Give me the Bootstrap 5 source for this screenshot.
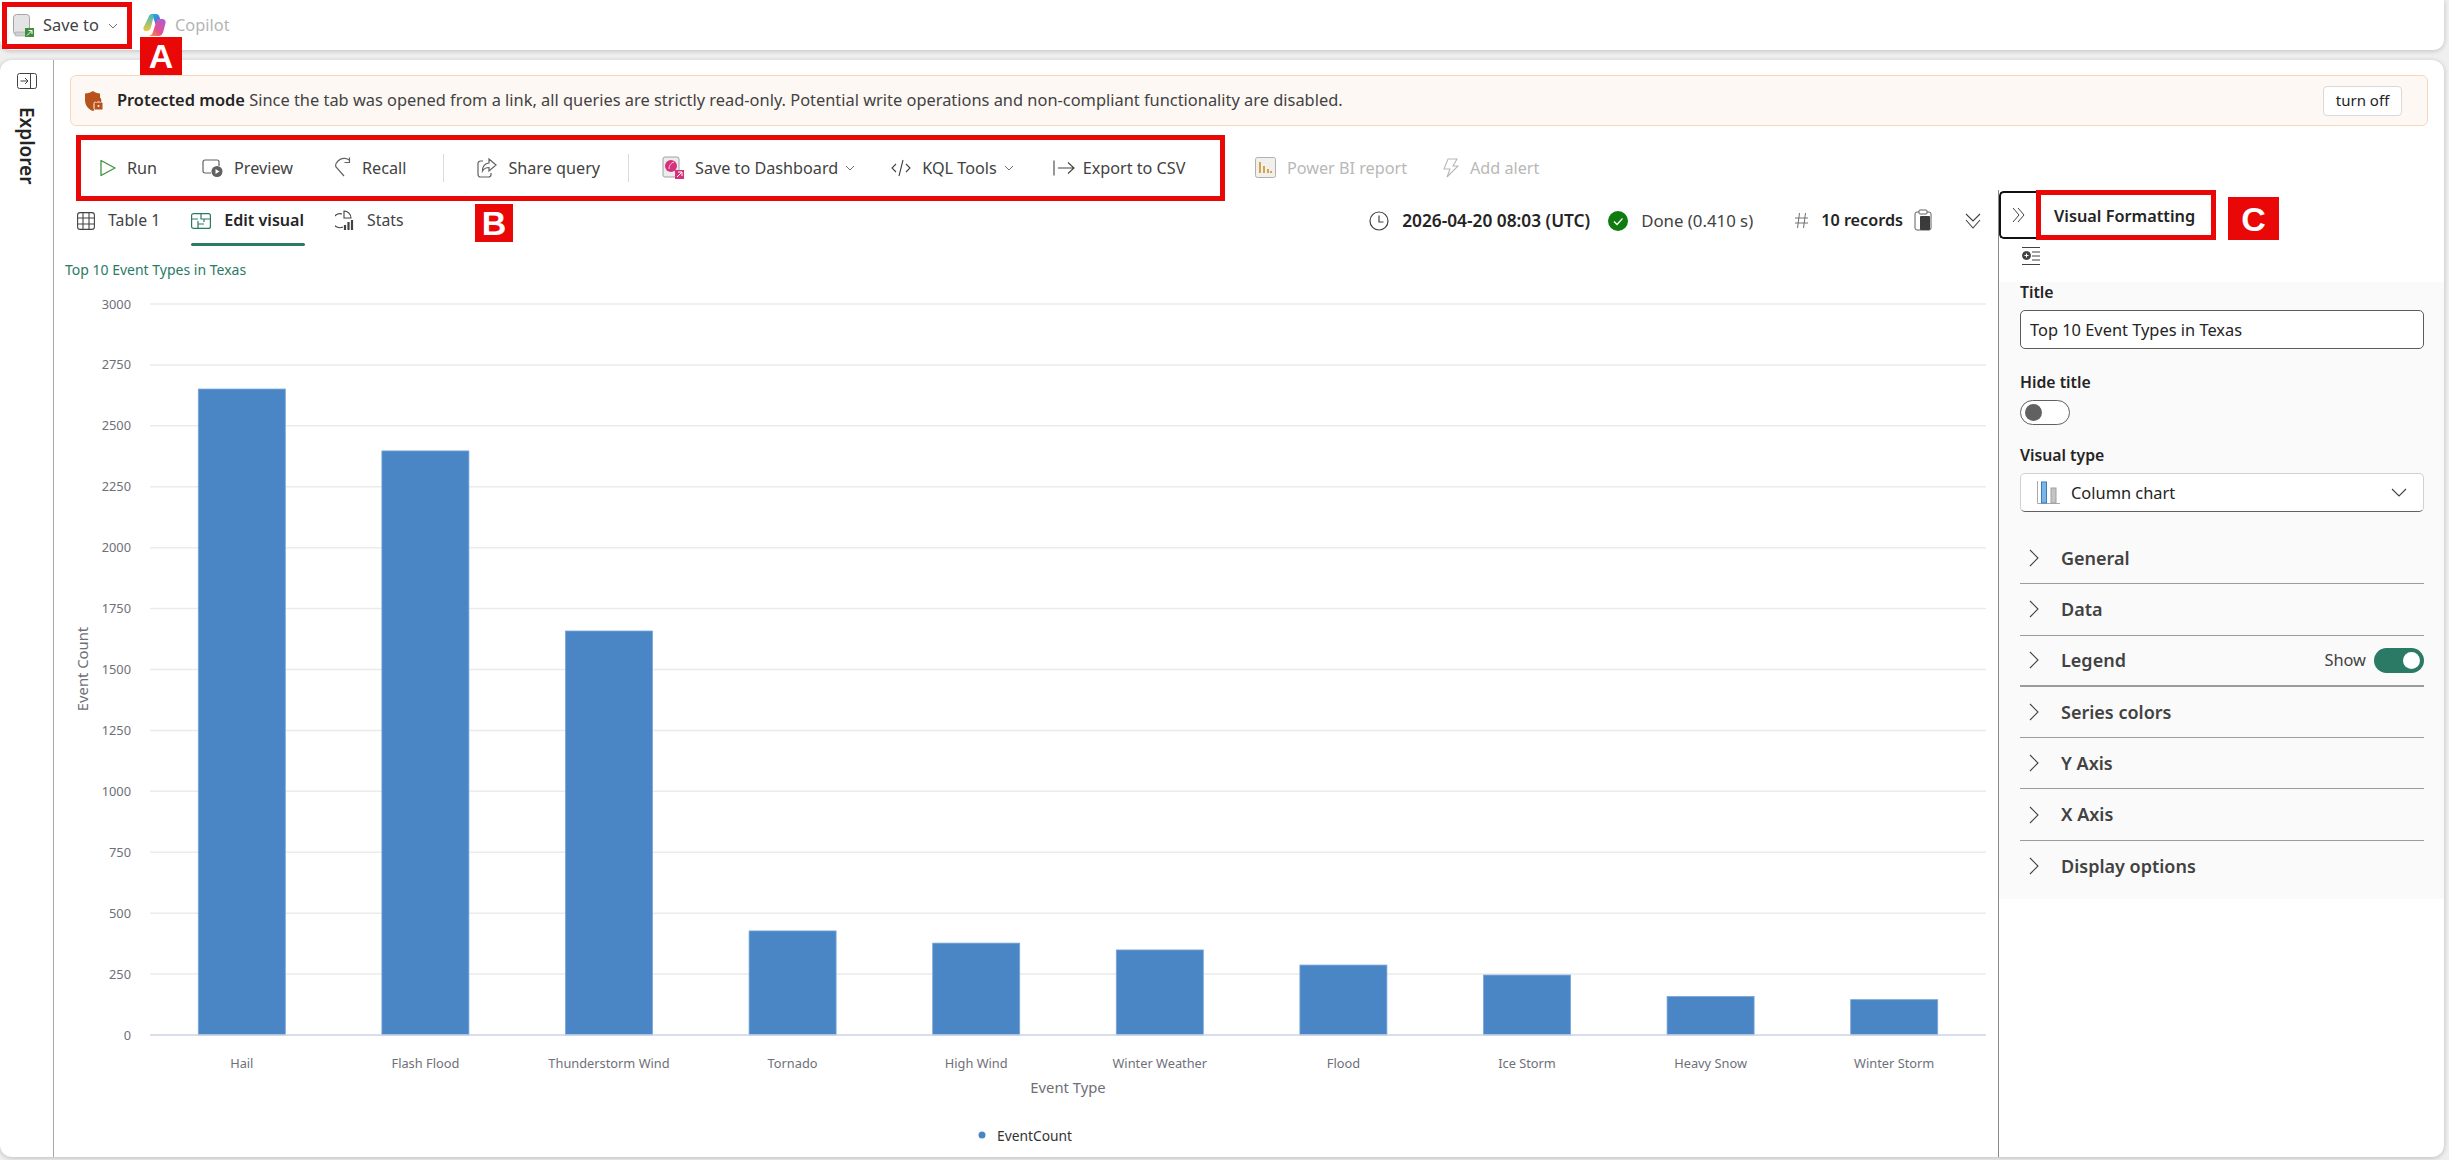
<!DOCTYPE html>
<html lang="en">

<head>
    <meta charset="UTF-8">
    <meta name="viewport" content="width=device-width, initial-scale=1">
    <title>Top 10 Event Types in Texas</title>

    <!-- Bootstrap CSS -->
    <link href="https://cdn.jsdelivr.net/npm/bootstrap@5.3.2/dist/css/bootstrap.min.css" rel="stylesheet">

    <style>
        html, body { height: 100%; }
        body { background: #efefef; font-family: "Noto Sans", "Open Sans", sans-serif; font-size: 16.4px; color: #424242; overflow: hidden; }
        svg { display: block; flex: none; }

        .top-strip { height: 50px; background: #fff; box-shadow: 0 1px 5px rgba(0,0,0,.2); border-radius: 0 0 10px 10px; margin-right: 5px; }
        .mark-a { width: 130px; height: 47px; margin: 2px 0 0 2px; border: 5px solid #e90707; padding-left: 6px; gap: 9px; }
        .tag-red { position: absolute; background: #e90707; color: #fff; font-family: "Liberation Sans", sans-serif; font-weight: 700; font-size: 34px; line-height: 1; display: flex; align-items: center; justify-content: center; }
        .tag-a { left: 140px; top: 37px; width: 42px; height: 38px; z-index: 5; }
        .tag-b { left: 475px; top: 204px; width: 38px; height: 38px; }
        .tag-c { left: 2228px; top: 197px; width: 51px; height: 43px; }
        .copilot-wrap { gap: 9px; margin-left: 11px; color: #b4b4b4; }

        .main-shell { height: 1097px; margin-top: 10px; margin-right: 5px; background: #fff; border-radius: 12px; box-shadow: 0 1px 5px rgba(0,0,0,.22); overflow: hidden; }
        .side-rail { width: 54px; border-right: 1px solid #a8a8a8; padding-top: 13px; }
        .rail-label { writing-mode: vertical-rl; font-weight: 600; font-size: 19px; color: #242424; margin-top: 18px; }

        .warn-strip { height: 51px; margin: 15px 16px 9px 16px; background: #fdf8f4; border: 1px solid #f7d6bc; border-radius: 6px; padding: 0 25px 0 13px; gap: 13px; }
        .warn-strip b { font-weight: 600; color: #242424; }
        .turn-off { height: 30px; width: 79px; padding: 0; background: #fff; border: 1px solid #d9d9d9; border-radius: 4px; font-size: 15px; color: #242424; }

        .left-col { width: 1944px; }
        .tool-row { padding-left: 22px; font-size: 16.2px; }
        .mark-b { width: 1149px; height: 66px; border: 5px solid #e90707; padding-left: 19px; }
        .tool-item { gap: 11px; white-space: nowrap; color: #424242; }
        .tool-item.tg45 { margin-right: 45px; }
        .tool-item.tg41 { margin-right: 41px; }
        .tool-item.tg37 { margin-right: 37px; }
        .tool-item.tg28 { margin-right: 28px; }
        .tool-item.tg36 { margin-right: 36px; }
        .tool-item.tg39 { margin-right: 39px; }
        .tool-item.tight { gap: 8px; }
        .tool-off { color: #b8b8b8; }
        .tool-off.first { margin-left: 30px; }
        .tool-sep { width: 1px; height: 28px; background: #dcdcdc; margin-right: 33px; }
        .chev-tight { margin-left: -4px; }

        .tabs-row { height: 49px; padding: 0 17px 0 23px; }
        .tab-item { gap: 13px; margin-right: 31px; color: #424242; position: relative; height: 49px; padding-bottom: 10px; font-size: 15.8px; }
        .tab-item.on { font-weight: 600; color: #242424; font-size: 16.100px; }
        .tab-item.on::after { content: ""; position: absolute; left: 0; right: -1px; bottom: 4px; height: 3px; background: #2a7a66; border-radius: 2px; }
        .stat-group { padding-bottom: 10px; }
        .stat-item { gap: 13px; white-space: nowrap; }
        .stat-item b { font-weight: 600; color: #242424; font-size: 16.2px; }
        .stat-item b.stamp { font-size: 17.3px; }
        .stat-item.stat-a { margin-right: 18px; }
        .stat-item.stat-b { margin-right: 42px; font-size: 16.8px; }
        .stat-item.stat-c { margin-right: 33px; }
        .clip-ico { margin-left: -2px; }

        .chart-box { height: 907px; }
        .chart-box text { font-family: "Noto Sans", sans-serif; }

        .fmt-pane { width: 446px; margin-top: 55px; border-left: 1px solid #8a8a8a; }
        .fmt-tabs { height: 50px; }
        .fold-btn { width: 37px; height: 48px; border: 2px solid #111; border-right: 0; border-radius: 5px 0 0 5px; margin-top: 1px; }
        .mark-c { width: 180px; height: 50px; border: 5px solid #e90707; font-weight: 600; color: #242424; padding: 3px 0 0 13px; font-size: 16.3px; }
        .fmt-body { background: #fafafa; padding: 0 20px 7px 21px; }
        .fmt-icon-row { height: 42px; padding: 6px 0 0 23px; }
        .fld-label { font-weight: 600; color: #242424; font-size: 15.8px; line-height: 20px; margin-bottom: 8px; }
        .fld-label.hide-lbl { margin-top: 23px; }
        .fld-label.type-lbl { margin-top: 20px; }
        .fld-input { height: 39px; border: 1px solid #5c5c5c; border-radius: 5px; font-size: 16.4px; padding: 0 9px; color: #242424; background: #fff; }
        .fld-input:focus { border-color: #5c5c5c; box-shadow: none; color: #242424; }
        .sw-off { width: 50px; height: 25px; border: 1px solid #616161; border-radius: 13px; padding-left: 4px; background: #fff; }
        .sw-off i { width: 17px; height: 17px; border-radius: 50%; background: #616161; }
        .sw-on { width: 50px; height: 25px; border-radius: 13px; background: #2a7a66; padding-right: 4px; margin-left: -13px; }
        .sw-on i { width: 17px; height: 17px; border-radius: 50%; background: #fff; }
        .fld-select { height: 39px; border: 1px solid #d1d1d1; border-bottom-color: #616161; border-radius: 5px; background: #fff; padding: 0 16px; gap: 11px; color: #242424; }
        .fld-select span { padding-top: 2px; }
        .sect-list { margin-top: 21px; }
        .sect-row { height: 51.3px; border-bottom: 1px solid #9c9c9c; padding-left: 9px; gap: 21px; font-weight: 600; font-size: 18px; }
        .sect-row.last { border-bottom: 0; }
        .sect-row.thick { border-bottom-width: 2px; }
        .sect-row span.show-txt { font-weight: 400; font-size: 16.4px; color: #424242; }
    </style>
</head>

<body>
    <!-- top bar -->
    <div class="top-strip d-flex align-items-start">
        <div class="mark-a d-flex align-items-center">
            <svg width="21" height="23" viewBox="0 0 21 23">
                <rect x=".5" y=".5" width="16" height="20" rx="3" fill="#e4e4e4" stroke="#a4a4a4"/>
                <rect x="2" y="18" width="12" height="4" rx="1" fill="#cfcfcf" stroke="#a4a4a4" stroke-width=".6"/>
                <rect x="12" y="14" width="9" height="9" fill="#3f8f3f"/>
                <path d="M14 21.500l5-5M15.500 16.500h3.500V20" stroke="#fff" fill="none"/>
            </svg>
            <span class="text-nowrap">Save to</span>
            <svg width="10" height="6" viewBox="0 0 10 6"><path d="M1 1l4 4 4-4" fill="none" stroke="#707070"/></svg>
        </div>
        <div class="copilot-wrap d-flex align-items-center h-100">
            <svg width="23" height="22" viewBox="0 0 23 22">
                <defs>
                    <linearGradient id="cpA" x1="0" y1="0" x2="1" y2="1"><stop offset="0" stop-color="#2bb3e8"/><stop offset="1" stop-color="#3a5fd8"/></linearGradient>
                    <linearGradient id="cpB" x1="1" y1="0" x2="0" y2="1"><stop offset="0" stop-color="#a65ee0"/><stop offset=".6" stop-color="#e8508a"/><stop offset="1" stop-color="#f5a030"/></linearGradient>
                    <linearGradient id="cpC" x1="0" y1="0" x2="0" y2="1"><stop offset="0" stop-color="#3fbcc0"/><stop offset="1" stop-color="#f1c63c"/></linearGradient>
                </defs>
                <path d="M8 0h5c2 0 3 1 3.500 3l2 7h-6L10 3C9.700 1.500 9 .5 8 0z" fill="url(#cpA)"/>
                <path d="M6 2c.6-1.300 1.500-2 2.500-2 1 .5 1.500 1.500 2 3L8 13c-.7 2.500-2 4-4 4H2.500C.8 17 0 15 .5 13.500z" fill="url(#cpC)"/>
                <path d="M14 5h5.500c2.200 0 3.600 2 3 4l-2 8c-.7 3-2.500 5-5 5H6c2.500-.5 3.500-2.500 4.300-5z" fill="url(#cpB)"/>
            </svg>
            <span>Copilot</span>
        </div>
    </div>
    <div class="tag-red tag-a">A</div>

    <div class="main-shell d-flex">
        <!-- explorer rail -->
        <div class="side-rail d-flex flex-column align-items-center">
            <svg width="20" height="16" viewBox="0 0 20 16" fill="none" stroke="#424242">
                <rect x=".5" y=".5" width="19" height="15" rx="2"/>
                <path d="M13.500 1v14M3.500 8h7M8 5l3 3-3 3"/>
            </svg>
            <div class="rail-label">Explorer</div>
        </div>

        <div class="flex-grow-1 d-flex flex-column">
            <div class="warn-strip d-flex align-items-center">
                <svg width="20" height="22" viewBox="0 0 20 22">
                    <path d="M9 1c2 1.500 4 2.500 7 2.500V10C16 15 13 19 9 21 4 19 1 15 1 10V3.500C4 3.500 6.500 2.500 9 1z" fill="#b7521c"/>
                    <rect x="10" y="12" width="9" height="8" rx="1.500" fill="#b7521c" stroke="#fdf8f4"/>
                    <path d="M12.500 12v-2a2 2 0 0 1 4 0v2" fill="none" stroke="#b7521c" stroke-width="1.500"/>
                    <circle cx="14.500" cy="16" r="1" fill="#fdf8f4"/>
                </svg>
                <span class="flex-grow-1"><b>Protected mode</b> Since the tab was opened from a link, all queries are strictly read-only. Potential write operations and non-compliant functionality are disabled.</span>
                <button type="button" class="btn turn-off">turn off</button>
            </div>

            <div class="d-flex flex-grow-1">
                <div class="left-col">
                    <!-- toolbar -->
                    <div class="tool-row d-flex align-items-center">
                        <div class="mark-b d-flex align-items-center">
                            <div class="tool-item tg45 d-flex align-items-center">
                                <svg width="16" height="18" viewBox="0 0 16 18"><path d="M1 1.500v15L15 9z" fill="none" stroke="#3d9140" stroke-width="1.300" stroke-linejoin="round"/></svg>
                                <span>Run</span>
                            </div>
                            <div class="tool-item tg41 d-flex align-items-center">
                                <svg width="21" height="18" viewBox="0 0 21 18" fill="none" stroke="#616161" stroke-width="1.200">
                                    <path d="M9 14H3a2 2 0 0 1-2-2V3a2 2 0 0 1 2-2h12a2 2 0 0 1 2 2v4"/>
                                    <circle cx="15" cy="12.500" r="5.500" fill="#616161" stroke="none"/>
                                    <path d="M13.500 10v5l4-2.500z" fill="#fff" stroke="none"/>
                                </svg>
                                <span>Preview</span>
                            </div>
                            <div class="tool-item tg37 d-flex align-items-center">
                                <svg width="17" height="21" viewBox="0 0 17 21" fill="none" stroke="#616161" stroke-width="1.200">
                                    <path d="M15 3c-3-2.500-8-2-11 1-2 2-3 4-2 6l8 9"/>
                                    <path d="M15.500 .5v5h-5"/>
                                </svg>
                                <span>Recall</span>
                            </div>
                            <div class="tool-sep"></div>
                            <div class="tool-item tg28 d-flex align-items-center">
                                <svg width="20" height="20" viewBox="0 0 20 20" fill="none" stroke="#616161" stroke-width="1.200">
                                    <path d="M6 3H3.500A2.500 2.500 0 0 0 1 5.500v11A2.500 2.500 0 0 0 3.500 19h8a2.500 2.500 0 0 0 2.500-2.500V15"/>
                                    <path d="M12 1l7 6-7 6V9.500c-3 0-5 1-6.500 3.500 0-5 2.500-7.500 6.500-8z"/>
                                </svg>
                                <span>Share query</span>
                            </div>
                            <div class="tool-sep"></div>
                            <div class="tool-item tg36 d-flex align-items-center">
                                <svg width="22" height="23" viewBox="0 0 22 23">
                                    <rect x="1" y="1" width="16" height="20" rx="2" fill="#ececec" stroke="#a0a0a0"/>
                                    <circle cx="9" cy="10" r="6" fill="#d6307c"/>
                                    <path d="M7 13c0-4 2-6 5-7" stroke="#f6c8dc" fill="none"/>
                                    <rect x="13" y="14" width="9" height="9" fill="#d6307c"/>
                                    <path d="M15 21l5-5M16 16h4v4" stroke="#fff" fill="none"/>
                                </svg>
                                <span>Save to Dashboard</span>
                                <svg width="10" height="6" viewBox="0 0 10 6" class="chev-tight"><path d="M1 1l4 4 4-4" fill="none" stroke="#707070"/></svg>
                            </div>
                            <div class="tool-item tg39 d-flex align-items-center">
                                <svg width="20" height="18" viewBox="0 0 20 18" fill="none" stroke="#424242" stroke-width="1.100"><path d="M5 5L1 9l4 4M15 5l4 4-4 4M12 1L8 17"/></svg>
                                <span>KQL Tools</span>
                                <svg width="10" height="6" viewBox="0 0 10 6" class="chev-tight"><path d="M1 1l4 4 4-4" fill="none" stroke="#707070"/></svg>
                            </div>
                            <div class="tool-item tight d-flex align-items-center">
                                <svg width="22" height="16" viewBox="0 0 22 16" fill="none" stroke="#424242" stroke-width="1.100"><path d="M1 .5v15M5 8h16M15 2.500L21 8l-6 5.500"/></svg>
                                <span>Export to CSV</span>
                            </div>
                        </div>
                        <div class="tool-item tool-off first tg36 d-flex align-items-center">
                            <svg width="21" height="21" viewBox="0 0 21 21">
                                <rect x=".5" y=".5" width="20" height="20" rx="2" fill="#f2f0ea" stroke="#b0b0b0"/>
                                <path d="M5 5v11M9 9v7M13 12v4M16 14v2" stroke="#c98a1e" stroke-width="1.500"/>
                            </svg>
                            <span>Power BI report</span>
                        </div>
                        <div class="tool-item tool-off d-flex align-items-center">
                            <svg width="16" height="20" viewBox="0 0 16 20" fill="none" stroke="#b8b8b8" stroke-width="1.100"><path d="M5 1h9l-4 7h5L4 19l3-8H1z"/></svg>
                            <span>Add alert</span>
                        </div>
                    </div>

                    <!-- tabs + status -->
                    <div class="tabs-row d-flex align-items-center">
                        <div class="tab-item d-flex align-items-center">
                            <svg width="18" height="18" viewBox="0 0 18 18" fill="none" stroke="#424242" stroke-width="1.100"><rect x=".6" y=".6" width="16.800" height="16.800" rx="2.500"/><path d="M6 1v16M12 1v16M1 6h16M1 12h16"/></svg>
                            <span>Table 1</span>
                        </div>
                        <div class="tab-item on d-flex align-items-center">
                            <svg width="20" height="16" viewBox="0 0 20 16" fill="none" stroke="#2a7a66" stroke-width="1.200"><rect x=".6" y=".6" width="18.800" height="14.800" rx="2"/><path d="M1 6h6M10 1v5h9M13 6v3M7 11h6M7 8v7"/></svg>
                            <span>Edit visual</span>
                        </div>
                        <div class="tab-item d-flex align-items-center">
                            <svg width="19" height="21" viewBox="0 0 19 21" fill="none" stroke="#424242" stroke-width="1.100">
                                <path d="M7 4a7 7 0 1 0 1 13"/><path d="M9 1a7 7 0 0 1 7 7H9z"/>
                                <path d="M10 20v-5M13.500 20v-8M17 20V10" stroke-width="2.200"/>
                            </svg>
                            <span>Stats</span>
                        </div>
                        <div class="stat-group ms-auto d-flex align-items-center">
                            <div class="stat-item stat-a d-flex align-items-center">
                                <svg width="20" height="20" viewBox="0 0 20 20" fill="none" stroke="#424242" stroke-width="1.200"><circle cx="10" cy="10" r="9"/><path d="M10 4.500V11h4.500"/></svg>
                                <b class="stamp">2026-04-20 08:03 (UTC)</b>
                            </div>
                            <div class="stat-item stat-b d-flex align-items-center">
                                <svg width="20" height="20" viewBox="0 0 20 20"><circle cx="10" cy="10" r="10" fill="#107c10"/><path d="M6 10.500l3 3 5.500-6" fill="none" stroke="#fff" stroke-width="1.300"/></svg>
                                <span>Done (0.410 s)</span>
                            </div>
                            <div class="stat-item stat-c d-flex align-items-center">
                                <svg width="13" height="15" viewBox="0 0 13 15" fill="none" stroke="#707070"><path d="M4.500 0L2.500 15M10.500 0l-2 15M0 5h13M0 10h13"/></svg>
                                <b>10 records</b>
                                <svg width="18" height="22" viewBox="0 0 18 22" class="clip-ico">
                                    <rect x="1" y="3" width="16" height="18" rx="2" fill="none" stroke="#616161"/>
                                    <rect x="5" y="1" width="8" height="4" rx="1" fill="#fff" stroke="#616161"/>
                                    <rect x="6" y="7" width="10" height="14" rx="1" fill="#3b3b3b"/>
                                </svg>
                            </div>
                            <svg width="16" height="16" viewBox="0 0 16 16" fill="none" stroke="#424242" stroke-width="1.100"><path d="M1 1l7 7 7-7M1 7l7 8 7-8"/></svg>
                        </div>
                    </div>

                    <!-- chart -->
                    <div class="chart-box">
                        <svg id="chart" width="1944" height="907" viewBox="0 0 1944 907"></svg>
                    </div>
                </div>

                <!-- visual formatting pane -->
                <div class="fmt-pane">
                    <div class="fmt-tabs d-flex">
                        <div class="fold-btn d-flex align-items-center justify-content-center">
                            <svg width="13" height="16" viewBox="0 0 13 16" fill="none" stroke="#424242"><path d="M1 1l6 7-6 7M6 1l6 7-6 7"/></svg>
                        </div>
                        <div class="mark-c d-flex align-items-center">Visual Formatting</div>
                    </div>
                    <div class="fmt-icon-row">
                        <svg width="18" height="20" viewBox="0 0 18 20" fill="none" stroke="#424242">
                            <path d="M0 1.500h18M0 18.500h18M10 6h8M10 10h8M10 14h8"/>
                            <circle cx="4.500" cy="9.500" r="4" fill="#424242"/>
                            <path d="M2.500 9.500h4M4.500 7.500v4" stroke="#fff"/>
                        </svg>
                    </div>
                    <div class="fmt-body">
                        <div class="fld-label">Title</div>
                        <input type="text" class="form-control fld-input" value="Top 10 Event Types in Texas">
                        <div class="fld-label hide-lbl">Hide title</div>
                        <div class="sw-off d-flex align-items-center"><i></i></div>
                        <div class="fld-label type-lbl">Visual type</div>
                        <div class="fld-select d-flex align-items-center">
                            <svg width="23" height="23" viewBox="0 0 23 23">
                                <path d="M.5 0v22.500H23" fill="none" stroke="#a8a8a8"/>
                                <rect x="4.500" y="1" width="5" height="21" fill="#7ab6ea" stroke="#3f7db5"/>
                                <rect x="14" y="7" width="5" height="15" fill="#c4c4c4" stroke="#a0a0a0"/>
                            </svg>
                            <span class="flex-grow-1">Column chart</span>
                            <svg width="16" height="9" viewBox="0 0 16 9"><path d="M1 1l7 7 7-7" fill="none" stroke="#424242" stroke-width="1.100"/></svg>
                        </div>
                        <div id="sections" class="sect-list"></div>
                    </div>
                </div>
            </div>
        </div>
    </div>
    <div class="tag-red tag-b">B</div>
    <div class="tag-red tag-c">C</div>

    <script>
        // column chart, offsets are relative to the chart svg
        const events = [
            ["Hail", 2651], ["Flash Flood", 2397], ["Thunderstorm Wind", 1658], ["Tornado", 427], ["High Wind", 377],
            ["Winter Weather", 349], ["Flood", 287], ["Ice Storm", 246], ["Heavy Snow", 158], ["Winter Storm", 145]
        ];
        const x0 = 96, xEnd = 1932, y0 = 785, yTop = 54, maxVal = 3000;
        const yPos = v => y0 - (y0 - yTop) * v / maxVal;
        const step = (xEnd - x0) / events.length;
        let out = `<text x="11" y="25" font-size="14" fill="#2a7a66">Top 10 Event Types in Texas</text>`;

        for (let v = 0; v <= maxVal; v += 250) {
            const y = yPos(v);
            if (v > 0) out += `<line x1="${x0}" x2="${xEnd}" y1="${y}" y2="${y}" stroke="#ebebeb" stroke-width="1.500"/>`;
            out += `<text x="77" y="${y + 4.500}" text-anchor="end" font-size="12.800" fill="#6e7079">${v}</text>`;
        }
        events.forEach(function (ev, i) {
            const cx = x0 + step * (i + 0.5), top = yPos(ev[1]);
            out += `<rect x="${cx - 43.500}" y="${top}" width="87" height="${y0 - top}" fill="#4a86c6" stroke="#76a5d8" stroke-width=".8"/>`;
            out += `<text x="${cx}" y="${y0 + 33}" text-anchor="middle" font-size="12.800" fill="#6e7079">${ev[0]}</text>`;
        });
        out += `<line x1="${x0}" x2="${xEnd}" y1="${y0}" y2="${y0}" stroke="#ccd3e6" stroke-width="1.500"/>`;
        out += `<text x="1014" y="843" text-anchor="middle" font-size="14.800" fill="#6e7079">Event Type</text>`;
        out += `<text transform="translate(34,419) rotate(-90)" text-anchor="middle" font-size="14.800" fill="#6e7079">Event Count</text>`;
        out += `<circle cx="928" cy="885" r="3.500" fill="#4a86c6"/>`;
        out += `<text x="943" y="891" font-size="13.800" fill="#333">EventCount</text>`;
        document.getElementById("chart").innerHTML = out;

        // collapsed sections of the formatting pane
        const sections = ["General", "Data", "Legend", "Series colors", "Y Axis", "X Axis", "Display options"];
        const chevron = `<svg width="11" height="18" viewBox="0 0 11 18"><path d="M1 1l8 8-8 8" fill="none" stroke="#424242" stroke-width="1.100"/></svg>`;
        document.getElementById("sections").innerHTML = sections.map(function (name, i) {
            let cls = "sect-row d-flex align-items-center";
            let extra = "";
            if (name === "Legend") {
                cls += " thick";
                extra = `<span class="show-txt ms-auto">Show</span><div class="sw-on d-flex align-items-center justify-content-end"><i></i></div>`;
            }
            if (i === sections.length - 1) cls += " last";
            return `<div class="${cls}">${chevron}<span>${name}</span>${extra}</div>`;
        }).join("");
    </script>

    <!-- Bootstrap JS -->
    <script src="https://cdn.jsdelivr.net/npm/bootstrap@5.3.2/dist/js/bootstrap.bundle.min.js"></script>
</body>

</html>
